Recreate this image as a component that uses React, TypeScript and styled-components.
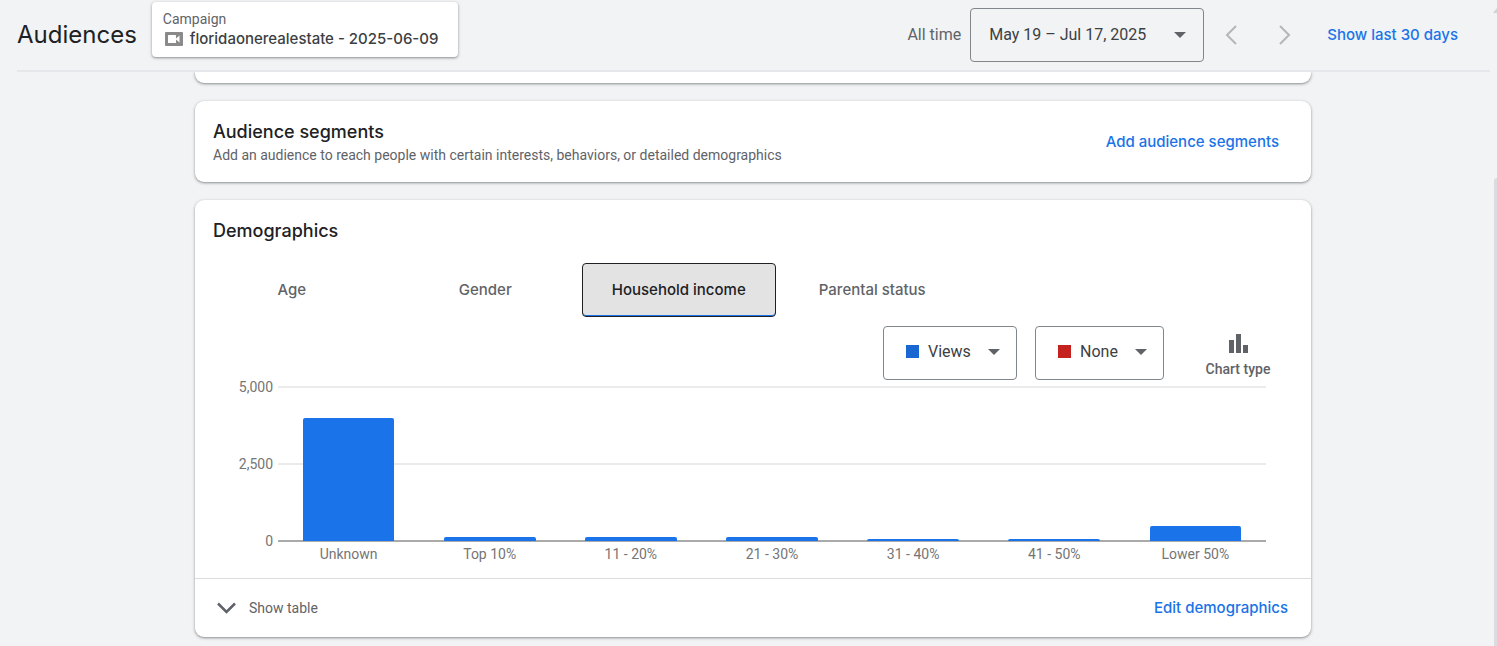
import React from "react";
import styled, { createGlobalStyle } from "styled-components";

const display = `Inter, "Open Sans", sans-serif`;
const body = `Roboto, "Liberation Sans", sans-serif`;

const GlobalStyle = createGlobalStyle`
  *, *::before, *::after { box-sizing: border-box; }
  html { height: 100%; overflow: hidden; }
  body { margin: 0; height: 100%; overflow: hidden; background: #f1f3f4; color: #202124; font: 14px/20px ${body}; }
  button, select { font: inherit; color: inherit; margin: 0; padding: 0; border: 0; background: none; cursor: pointer; }
  h1, h2, p { margin: 0; font-weight: 400; }
`;

const elevation = `0 1px 2px rgba(60, 64, 67, 0.4), 0 1px 3px 1px rgba(60, 64, 67, 0.15)`;

const Header = styled.header`
  display: flex;
  align-items: center;
  height: 72px;
  margin: 0 7px 0 17px;
  border-bottom: 2px solid #e6e7ea;
`;

const PageTitle = styled.h1`
  font: 400 24px/32px ${display};
`;

const CampaignCard = styled.div`
  align-self: flex-start;
  min-width: 306px;
  margin: 2px auto 0 15px;
  padding: 8px 11px 9px;
  border-radius: 4px;
  background: #fff;
  box-shadow: ${elevation};
  color: #5f6368;
  line-height: 19px;
`;

const CampaignName = styled.div`
  display: flex;
  align-items: center;
  gap: 7px;
  color: #3c4043;
  font: 500 15px/19px ${display};
`;

const RangeLabel = styled.label`
  margin-right: 9px;
  color: #5f6368;
  font-size: 16px;
`;

const SelectBox = styled.span<{ $width: number; $inset: number; $end: number }>`
  display: flex;
  align-items: center;
  width: ${(p) => p.$width}px;
  height: 54px;
  padding: 0 ${(p) => p.$end}px 0 ${(p) => p.$inset}px;
  border: 1px solid #80868b;
  border-radius: 4px;
  color: #3c4043;
  font-size: 16px;

  select {
    flex: 1;
    min-width: 0;
    appearance: none;
    outline: 0;
  }
`;

const MetricBox = styled(SelectBox)`
  padding-bottom: 2px;
`;

const Swatch = styled.span<{ $color: string }>`
  width: 13px;
  height: 13px;
  margin: 0 9px 2px 0;
  background: ${(p) => p.$color};
`;

const StepButton = styled.button`
  display: grid;
  place-items: center;
  width: 54px;
  height: 54px;
  color: #b4b7ba;
`;

const TextButton = styled.button`
  color: #1a73e8;
  font: 500 15px/20px ${display};
  white-space: nowrap;
`;

const HeaderAction = styled(TextButton)`
  margin: 0 32px 0 15px;
`;

const Content = styled.main`
  display: grid;
  gap: 18px;
  padding: 0 186px 9px 195px;
  overflow: hidden;
`;

const Card = styled.section`
  border-radius: 9px;
  background: #fff;
  box-shadow: ${elevation};
`;

const ScrolledCard = styled(Card)`
  height: 11px;
  border-radius: 0 0 9px 9px;
`;

const SegmentsCard = styled(Card)`
  display: flex;
  align-items: center;
  justify-content: space-between;
  padding: 18px 32px 17px 18px;
`;

const CardTitle = styled.h2`
  font: 500 18px/26px ${display};
`;

const Hint = styled.p`
  color: #5f6368;
`;

const DemographicsTitle = styled(CardTitle)`
  padding: 18px 18px 19px;
`;

const Tabs = styled.div`
  display: grid;
  grid-template-columns: repeat(4, 1fr);
  max-width: 774px;
`;

const Tab = styled.button<{ $active: boolean }>`
  height: 54px;
  font: 500 15px/20px ${display};
  color: ${(p) => (p.$active ? "#202124" : "#5f6368")};
  ${(p) =>
    p.$active &&
    `
    border: 1px solid #202124;
    border-radius: 4px;
    background: #e3e3e3;
    box-shadow: inset 0 -1px 0 #1a73e8;
  `}
`;

const ChartControls = styled.div`
  display: flex;
  justify-content: flex-end;
  gap: 18px;
  padding: 9px 31px 0 0;
`;

const ChartTypeButton = styled.button`
  display: flex;
  flex-direction: column;
  align-items: center;
  gap: 5px;
  width: 84px;
  margin-left: 14px;
  padding-top: 8px;
  color: #5f6368;
  font-weight: 500;
`;

const Chart = styled.div`
  display: grid;
  grid-template-columns: 78px 1fr;
  column-gap: 5px;
  margin: 6px 45px 0 0;
  padding-bottom: 14px;
  color: #757575;
`;

const Scale = styled.div`
  display: flex;
  flex-direction: column;
  justify-content: space-between;
  margin: -9px 0;
  text-align: right;
`;

const Plot = styled.div`
  display: grid;
  height: 156px;
`;

const GridLines = styled.div`
  grid-area: 1 / 1;
  display: flex;
  flex-direction: column;
  justify-content: space-between;
`;

const GridLine = styled.div<{ $base?: boolean }>`
  height: 2px;
  background: ${(p) => (p.$base ? "#aaaaaa" : "#ebebeb")};
`;

const Bars = styled.div`
  grid-area: 1 / 1;
  display: grid;
  grid-template-columns: repeat(7, 1fr);
  align-items: end;
  justify-items: center;
  padding-bottom: 1px;
`;

const Bar = styled.div`
  width: 65%;
  border-radius: 2px 2px 0 0;
  background: #1a73e8;
`;

const Categories = styled.div`
  grid-column: 2;
  display: grid;
  grid-template-columns: repeat(7, 1fr);
  margin-top: 2px;
  text-align: center;
`;

const CardFooter = styled.footer`
  display: flex;
  align-items: center;
  justify-content: space-between;
  height: 59px;
  padding: 0 23px 0 22px;
  border-top: 1px solid #dadce0;
`;

const ShowTable = styled.button`
  display: flex;
  align-items: center;
  gap: 13px;
  color: #5f6368;
`;

const ScrollArrow = styled.svg`
  position: fixed;
  top: 8px;
  right: 0;
`;

const ScrollThumb = styled.div`
  position: fixed;
  top: 178px;
  right: 0;
  bottom: 0;
  width: 3px;
  border-radius: 3px 0 0 0;
  background: #dadce0;
`;

const DropArrow = () => (
  <svg width="12" height="6" viewBox="0 0 12 6" fill="#5f6368" aria-hidden="true">
    <path d="M0 0h12L6 6z" />
  </svg>
);

const VideoIcon = () => (
  <svg width="20" height="14" viewBox="0 0 20 14" aria-hidden="true">
    <rect x="2" width="18" height="14" rx="1" fill="#8a8a8a" />
    <rect x="5" y="3" width="8" height="8" rx="0.5" fill="#fff" />
    <path d="M13 6.500 16.500 3.500v7L13 7.500z" fill="#fff" />
  </svg>
);

const SideChevron = ({ d }: { d: string }) => (
  <svg width="12" height="20" viewBox="0 0 12 20" fill="none" stroke="currentColor" strokeWidth="2" aria-hidden="true">
    <path d={d} />
  </svg>
);

const tabs = ["Age", "Gender", "Household income", "Parental status"];

const views = [
  { label: "Unknown", value: 4000 },
  { label: "Top 10%", value: 115 },
  { label: "11 - 20%", value: 115 },
  { label: "21 - 30%", value: 115 },
  { label: "31 - 40%", value: 75 },
  { label: "41 - 50%", value: 75 },
  { label: "Lower 50%", value: 480 },
];

export default function App() {
  const [tab, setTab] = React.useState("Household income");

  return (
    <>
      <GlobalStyle />
      <Header>
        <PageTitle>Audiences</PageTitle>
        <CampaignCard>
          Campaign
          <CampaignName>
            <VideoIcon />
            floridaonerealestate - 2025-06-09
          </CampaignName>
        </CampaignCard>
        <RangeLabel htmlFor="range">All time</RangeLabel>
        <SelectBox $width={234} $inset={18} $end={17}>
          <select id="range">
            <option>May 19 – Jul 17, 2025</option>
          </select>
          <DropArrow />
        </SelectBox>
        <StepButton aria-label="Previous period">
          <SideChevron d="M11 1 2 10l9 9" />
        </StepButton>
        <StepButton aria-label="Next period">
          <SideChevron d="m1 1 9 9-9 9" />
        </StepButton>
        <HeaderAction>Show last 30 days</HeaderAction>
      </Header>

      <Content>
        <ScrolledCard />
        <SegmentsCard>
          <div>
            <CardTitle>Audience segments</CardTitle>
            <Hint>Add an audience to reach people with certain interests, behaviors, or detailed demographics</Hint>
          </div>
          <TextButton>Add audience segments</TextButton>
        </SegmentsCard>

        <Card>
          <DemographicsTitle>Demographics</DemographicsTitle>
          <Tabs role="tablist">
            {tabs.map((name) => (
              <Tab key={name} role="tab" aria-selected={name === tab} $active={name === tab} onClick={() => setTab(name)}>
                {name}
              </Tab>
            ))}
          </Tabs>
          <ChartControls>
            <MetricBox $width={134} $inset={22} $end={16}>
              <Swatch $color="#1967d2" />
              <select aria-label="First metric">
                <option>Views</option>
              </select>
              <DropArrow />
            </MetricBox>
            <MetricBox $width={129} $inset={22} $end={16}>
              <Swatch $color="#c5221f" />
              <select aria-label="Second metric">
                <option>None</option>
              </select>
              <DropArrow />
            </MetricBox>
            <ChartTypeButton>
              <svg width="20" height="20" viewBox="0 0 20 20" fill="currentColor" aria-hidden="true">
                <path d="M1 6h5v13H1zM8 0h5v19H8zM15 11h5v8h-5z" />
              </svg>
              Chart type
            </ChartTypeButton>
          </ChartControls>
          <Chart>
            <Scale>
              <span>5,000</span>
              <span>2,500</span>
              <span>0</span>
            </Scale>
            <Plot>
              <GridLines>
                <GridLine />
                <GridLine />
                <GridLine $base />
              </GridLines>
              <Bars>
                {views.map(({ label, value }) => (
                  <Bar key={label} style={{ height: Math.round((value / 5000) * 154) }} />
                ))}
              </Bars>
            </Plot>
            <Categories>
              {views.map(({ label }) => (
                <span key={label}>{label}</span>
              ))}
            </Categories>
          </Chart>
          <CardFooter>
            <ShowTable>
              <svg width="19" height="12" viewBox="0 0 19 12" fill="none" stroke="currentColor" strokeWidth="2.500" aria-hidden="true">
                <path d="m1 1.500 8.500 8.500L18 1.500" />
              </svg>
              Show table
            </ShowTable>
            <TextButton>Edit demographics</TextButton>
          </CardFooter>
        </Card>
      </Content>

      <ScrollArrow width="4" height="5" viewBox="0 0 4 5" fill="#d0d2d5" aria-hidden="true">
        <path d="M4 0v5H0z" />
      </ScrollArrow>
      <ScrollThumb />
    </>
  );
}
